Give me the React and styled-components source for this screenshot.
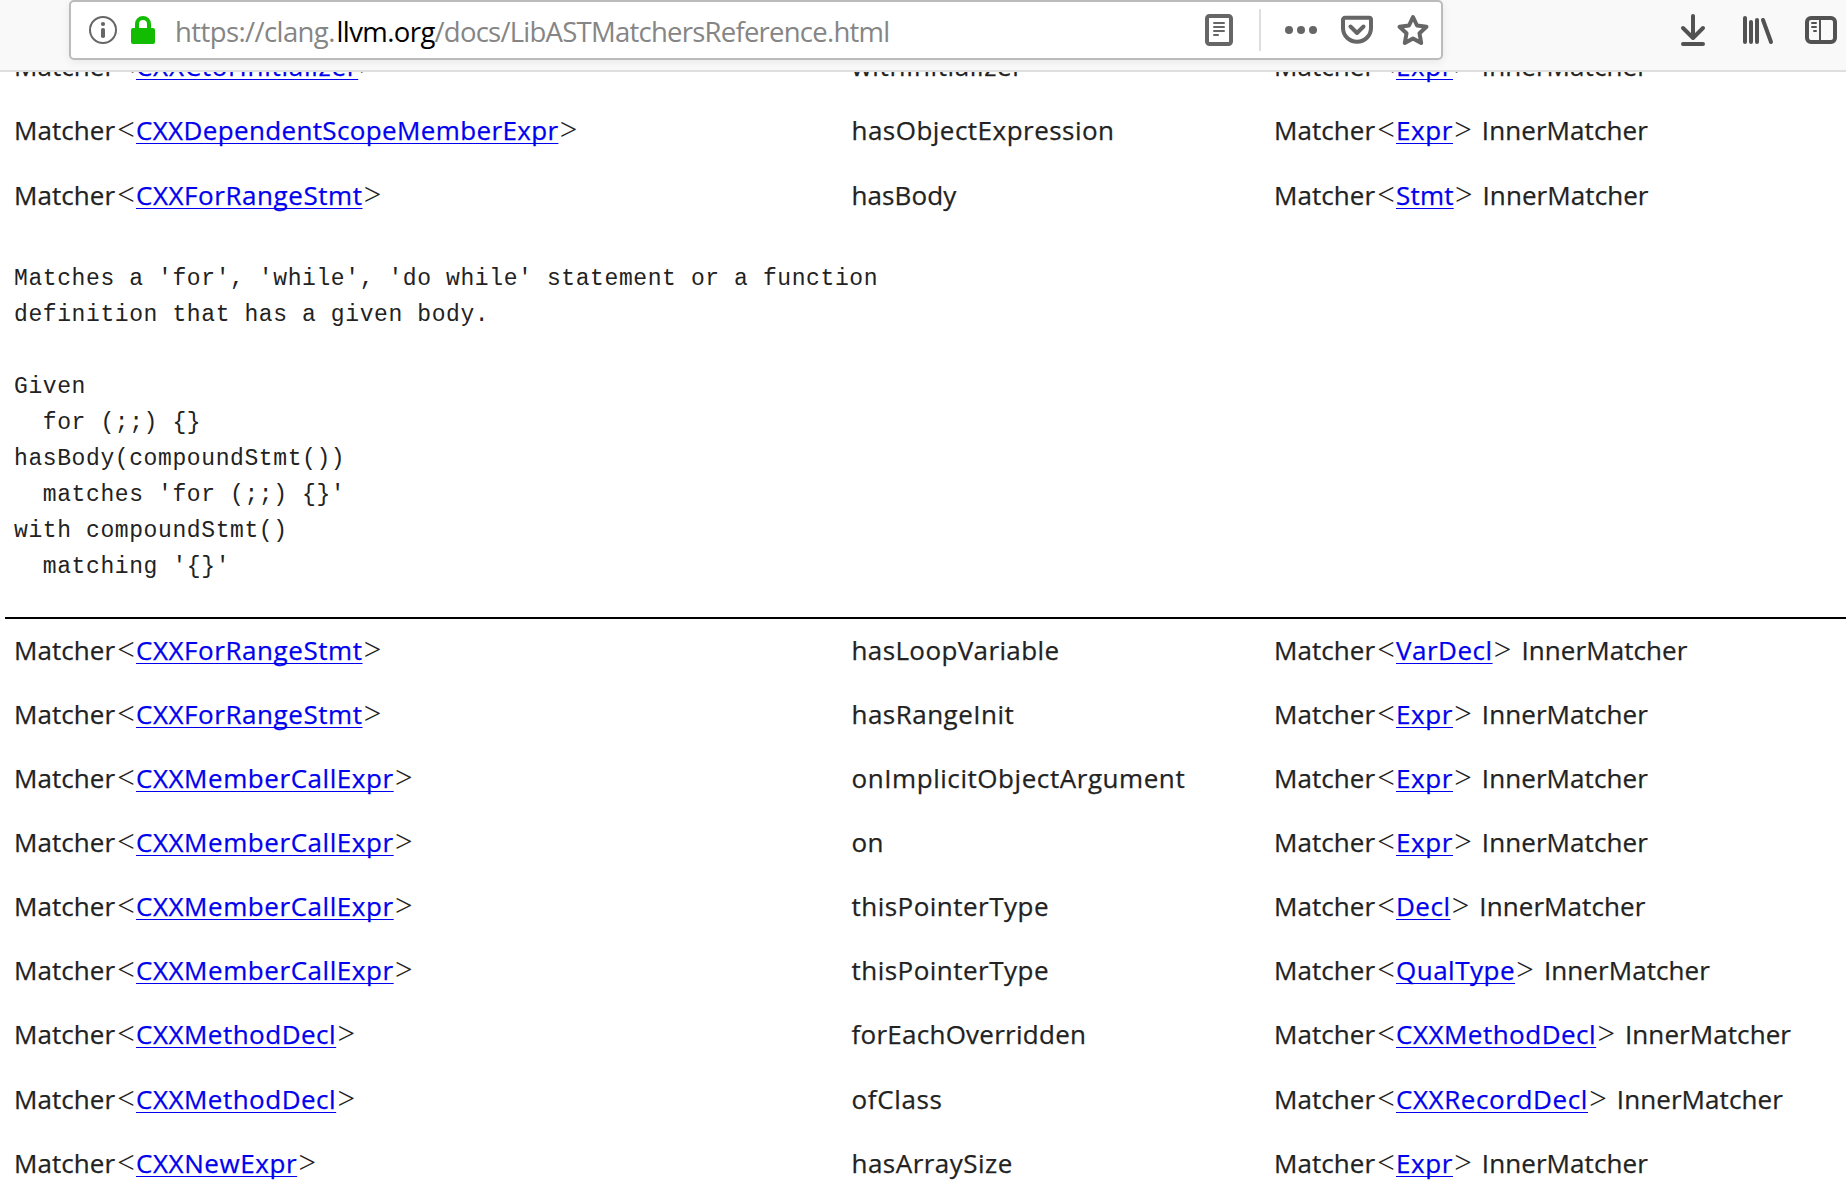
import React from "react";
import styled, { createGlobalStyle } from "styled-components";

const GlobalStyle = createGlobalStyle`
  * { box-sizing: border-box; }
  html, body { margin: 0; padding: 0; background: #fff; overflow: hidden; }
`;

const Window = styled.div`
  display: flex;
  flex-direction: column;
  width: 1846px;
  height: 1199px;
  overflow: hidden;
  background: #fff;
`;

const Toolbar = styled.header`
  display: flex;
  flex: none;
  align-items: flex-start;
  height: 72px;
  padding: 0 9px 0 69px;
  background: #f9f9f9;
  border-bottom: 2px solid #dfdfdf;
`;

const AddressBar = styled.div`
  display: flex;
  align-items: center;
  width: 1374px;
  height: 60px;
  padding: 0 12px 0 18px;
  background: #fff;
  border: 2px solid #bbb;
  border-radius: 5px;
  box-shadow: 0 2px 8px rgba(0, 0, 0, 0.07);
`;

const Icon = styled.svg`
  display: block;
  flex: none;
  width: 32px;
  height: 32px;
  margin-left: ${(p) => p.$gap || 0}px;
  color: ${(p) => p.$color || "#666"};
  overflow: visible;
`;

const Url = styled.div`
  display: flex;
  flex: 1;
  margin-left: 16px;
  padding-top: 4px;
  font: 27.5px/50px "Open Sans", "Noto Sans", sans-serif;
  white-space: pre;
  color: #858585;
`;

const UrlPart = styled.span`
  flex: none;
  width: ${(p) => p.$width}px;
  letter-spacing: ${(p) => p.$tracking}px;
  color: ${(p) => (p.$strong ? "#000" : "inherit")};
`;

const Divider = styled.div`
  width: 2px;
  height: 42px;
  margin-left: 24px;
  background: #dedede;
`;

const Actions = styled.div`
  display: flex;
  align-items: center;
  height: 60px;
  margin-left: auto;
`;

const Page = styled.main`
  flex: 1;
  min-height: 0;
  overflow: hidden;
  padding-left: 5px;
`;

const Matchers = styled.section`
  margin-top: ${(p) => p.$shift}px;
`;

const Row = styled.div`
  display: grid;
  grid-template-columns: 837.5px 422.5px 1fr;
  height: 64.15px;
  padding-left: 9px;
  font: 26px/64px "Open Sans", "Noto Sans", sans-serif;
  letter-spacing: 0.5px;
  color: #222;
  white-space: pre;
  -webkit-text-stroke: 0.25px;
`;

const Cell = styled.div`
  display: flex;
`;

const Word = styled.span`
  flex: none;
  width: ${(p) => p.$width || "auto"};
  margin-left: ${(p) => p.$gap || 0}px;
  letter-spacing: ${(p) => p.$tracking}px;
`;

const Angle = styled.span`
  width: 20px;
  font-family: "Liberation Serif", serif;
  font-size: 31px;
  letter-spacing: 0;
  text-align: center;
  -webkit-text-stroke: 0;
`;

const TypeLink = styled.a`
  color: #00e;
  letter-spacing: ${(p) => p.$tracking}px;
  text-decoration: underline;
  text-decoration-thickness: 1px;
  text-underline-offset: 3px;
  text-decoration-skip-ink: none;
`;

const Doc = styled.pre`
  margin: 0;
  padding: 34.4px 0 32.3px 9px;
  font: 23px/36px "Liberation Mono", monospace;
  letter-spacing: 0.6px;
  color: #222;
  border-bottom: 2px solid #000;
`;

const before = [
  ["CXXCtorInitializer", "withInitializer", "Expr"],
  ["CXXDependentScopeMemberExpr", "hasObjectExpression", "Expr"],
  ["CXXForRangeStmt", "hasBody", "Stmt"],
];

const after = [
  ["CXXForRangeStmt", "hasLoopVariable", "VarDecl"],
  ["CXXForRangeStmt", "hasRangeInit", "Expr"],
  ["CXXMemberCallExpr", "onImplicitObjectArgument", "Expr"],
  ["CXXMemberCallExpr", "on", "Expr"],
  ["CXXMemberCallExpr", "thisPointerType", "Decl"],
  ["CXXMemberCallExpr", "thisPointerType", "QualType"],
  ["CXXMethodDecl", "forEachOverridden", "CXXMethodDecl"],
  ["CXXMethodDecl", "ofClass", "CXXRecordDecl"],
  ["CXXNewExpr", "hasArraySize", "Expr"],
];

const tracking = {
  CXXCtorInitializer: 0.74,
  CXXDependentScopeMemberExpr: 0.36,
  CXXForRangeStmt: 0.56,
  CXXMemberCallExpr: 0.56,
  CXXNewExpr: 0.58,
  CXXRecordDecl: 0.6,
  Expr: 0.6,
  Stmt: 0.2,
  withInitializer: 0.64,
  hasBody: 0.1,
  hasLoopVariable: 0.38,
  onImplicitObjectArgument: 0.56,
  forEachOverridden: 0.26,
  ofClass: 0.65,
};

const doc = `Matches a 'for', 'while', 'do while' statement or a function
definition that has a given body.

Given
  for (;;) {}
hasBody(compoundStmt())
  matches 'for (;;) {}'
with compoundStmt()
  matching '{}'`;

function Matcher({ type, suffix }) {
  return (
    <Cell>
      <Word $width="102px" $tracking={0.05}>Matcher</Word>
      <Angle>&lt;</Angle>
      <TypeLink $tracking={tracking[type] ?? 0.5}>{type}</TypeLink>
      <Angle>&gt;</Angle>
      {suffix && <Word $gap={2} $tracking={0.08}> {suffix}</Word>}
    </Cell>
  );
}

function MatcherRows({ rows, shift }) {
  return (
    <Matchers $shift={shift}>
      {rows.map(([type, name, param], i) => (
        <Row key={i}>
          <Matcher type={type} />
          <Cell>
            <Word $tracking={tracking[name] ?? 0.48}>{name}</Word>
          </Cell>
          <Matcher type={param} suffix="InnerMatcher" />
        </Row>
      ))}
    </Matchers>
  );
}

const stroke = {
  fill: "none",
  stroke: "currentColor",
  strokeLinecap: "round",
  strokeLinejoin: "round",
};

export default function App() {
  return (
    <>
      <GlobalStyle />
      <Window>
        <Toolbar>
          <AddressBar>
            <Icon viewBox="0 0 32 32" $gap={-2}>
              <circle cx="16" cy="16" r="13" {...stroke} strokeWidth="2" />
              <circle cx="16" cy="10" r="2.1" fill="currentColor" />
              <rect x="14" y="14" width="4" height="10" rx="1.8" fill="currentColor" />
            </Icon>
            <Icon viewBox="0 0 32 32" $gap={8} $color="#12bc00">
              <path d="M10 15V10a6 6 0 0 1 12 0v5" fill="none" stroke="currentColor" strokeWidth="4" />
              <rect x="4" y="14" width="24" height="16" rx="2" fill="currentColor" />
            </Icon>
            <Url>
              <UrlPart $width={161.5} $tracking={-0.6}>https://clang.</UrlPart>
              <UrlPart $width={98} $tracking={-0.6} $strong>llvm.org</UrlPart>
              <UrlPart $width={454} $tracking={-0.76}>/docs/LibASTMatchersReference.html</UrlPart>
            </Url>
            <Icon viewBox="0 0 32 32">
              <rect x="4" y="2" width="24" height="28" rx="2.5" {...stroke} strokeWidth="4" />
              <path d="M11 9h10M11 13h10M11 17h10M11 21h4" {...stroke} strokeWidth="2" />
            </Icon>
            <Divider />
            <Icon viewBox="0 0 32 32" $gap={24}>
              <circle cx="4" cy="16" r="4" fill="currentColor" />
              <circle cx="16" cy="16" r="4" fill="currentColor" />
              <circle cx="28" cy="16" r="4" fill="currentColor" />
            </Icon>
            <Icon viewBox="0 0 32 32" $gap={24}>
              <path d="M4 3.8h24a2 2 0 0 1 2 2V14a14 13.8 0 0 1-28 0V5.8a2 2 0 0 1 2-2z" {...stroke} strokeWidth="4" />
              <path d="M9.5 12.5l6.5 6.5 6.5-6.5" {...stroke} strokeWidth="4" />
            </Icon>
            <Icon viewBox="0 0 32 32" $gap={24}>
              <path d="M16 3l4 8.5 9.5 1.3-7 6.5 1.7 9.7-8.2-4.6L7.8 29l1.7-9.7-7-6.5 9.5-1.3z" {...stroke} strokeWidth="4" />
            </Icon>
          </AddressBar>
          <Actions>
            <Icon viewBox="0 0 32 32" $color="#525252">
              <path d="M16 2v22M6 14l10 10 10-10M6 30h20" {...stroke} strokeWidth="4" />
            </Icon>
            <Icon viewBox="0 0 32 32" $gap={32} $color="#525252">
              <path d="M4 4v24M10 8v20M16 6v22M22 6l8 22" {...stroke} strokeWidth="4" />
            </Icon>
            <Icon viewBox="0 0 32 32" $gap={32} $color="#525252">
              <rect x="2" y="4" width="28" height="24" rx="4" {...stroke} strokeWidth="4" />
              <path d="M15 4v24" fill="none" stroke="currentColor" strokeWidth="2" />
              <path d="M7 9h4M7 13h4M9 17h2" {...stroke} strokeWidth="2" />
            </Icon>
          </Actions>
        </Toolbar>
        <Page>
          <MatcherRows rows={before} shift={-37.7} />
          <Doc>{doc}</Doc>
          <MatcherRows rows={after} shift={-1.85} />
        </Page>
      </Window>
    </>
  );
}
